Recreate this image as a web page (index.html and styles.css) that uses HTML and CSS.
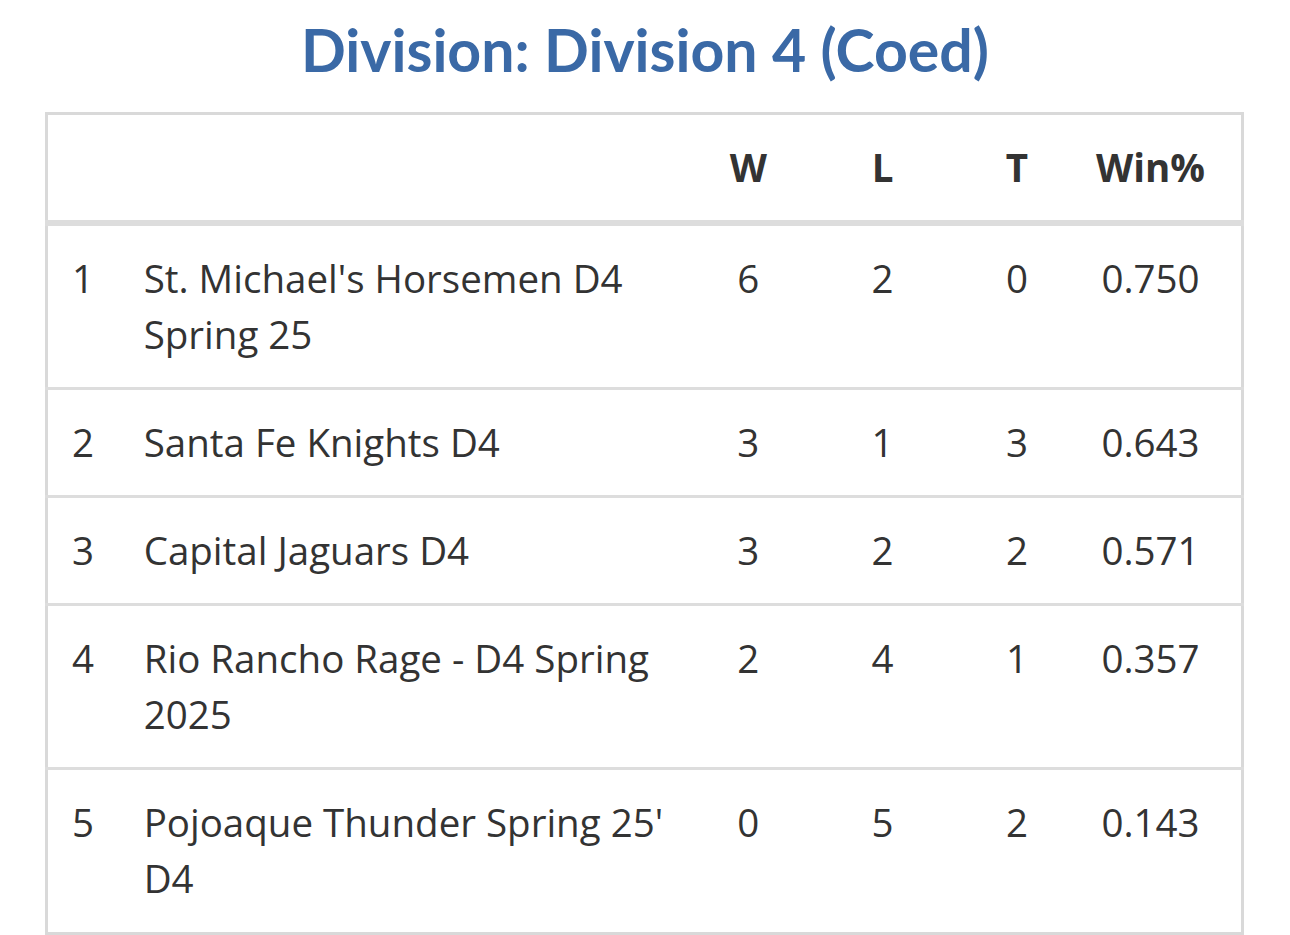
FILE: index.html
```html
<!DOCTYPE html>
<html lang="en">
<head>
<meta charset="utf-8">
<title>Division 4 (Coed) Standings</title>
<link rel="stylesheet" href="styles.css">
</head>
<body>
<div class="page">
  <h1 class="title">Division: Division 4 (Coed)</h1>
  <table class="standings">
    <colgroup>
      <col class="c-rank">
      <col class="c-team">
      <col class="c-num">
      <col class="c-num">
      <col class="c-num">
      <col class="c-pct">
    </colgroup>
    <thead>
      <tr>
        <th class="rank"></th>
        <th class="team"></th>
        <th class="num">W</th>
        <th class="num">L</th>
        <th class="num">T</th>
        <th class="pct">Win%</th>
      </tr>
    </thead>
    <tbody>
      <tr>
        <td class="rank">1</td>
        <td class="team">St. Michael's Horsemen D4 Spring 25</td>
        <td class="num">6</td><td class="num">2</td><td class="num">0</td>
        <td class="pct">0.750</td>
      </tr>
      <tr>
        <td class="rank">2</td>
        <td class="team">Santa Fe Knights D4</td>
        <td class="num">3</td><td class="num">1</td><td class="num">3</td>
        <td class="pct">0.643</td>
      </tr>
      <tr>
        <td class="rank">3</td>
        <td class="team">Capital Jaguars D4</td>
        <td class="num">3</td><td class="num">2</td><td class="num">2</td>
        <td class="pct">0.571</td>
      </tr>
      <tr>
        <td class="rank">4</td>
        <td class="team">Rio Rancho Rage - D4 Spring 2025</td>
        <td class="num">2</td><td class="num">4</td><td class="num">1</td>
        <td class="pct">0.357</td>
      </tr>
      <tr>
        <td class="rank">5</td>
        <td class="team">Pojoaque Thunder Spring 25' D4</td>
        <td class="num">0</td><td class="num">5</td><td class="num">2</td>
        <td class="pct">0.143</td>
      </tr>
    </tbody>
  </table>
</div>
</body>
</html>
```

FILE: styles.css
```css
html, body {
  margin: 0;
  padding: 0;
  background: #ffffff;
}

body {
  font-family: "Open Sans", "Liberation Sans", sans-serif;
  color: #333333;
}

.page {
  padding: 0 45px 0 45px;
}

.title {
  margin: 0;
  height: 112px;
  display: flex;
  align-items: center;
  justify-content: center;
  font-family: "Lato", "Open Sans", sans-serif;
  font-weight: 700;
  font-size: 59px;
  color: #3a69a6;
  padding-bottom: 14px;
  box-sizing: border-box;
}

.standings {
  width: 1199px;
  table-layout: fixed;
  border-collapse: collapse;
  border: 3px solid #d9d9d9;
  font-size: 38.5px;
  line-height: 56px;
}

.c-rank { width: 73px; }
.c-team { width: 560px; }
.c-num { width: 134px; }
.c-pct { width: 158px; }

.standings th,
.standings td {
  padding: 24px 0 25px 0;
  vertical-align: top;
  font-weight: 400;
}

.standings th {
  font-weight: 700;
  border-bottom: 6px solid #dddddd;
}

.standings tbody tr + tr td {
  border-top: 3px solid #dddddd;
}

.standings tbody tr:last-child td {
  padding-bottom: 26px;
}

.rank {
  padding-left: 24px !important;
  text-align: left;
}

.team {
  padding-left: 24px !important;
  padding-right: 8px !important;
  text-align: left;
}

.num {
  text-align: center;
}

.pct {
  text-align: center;
  padding-right: 24px !important;
}
```
